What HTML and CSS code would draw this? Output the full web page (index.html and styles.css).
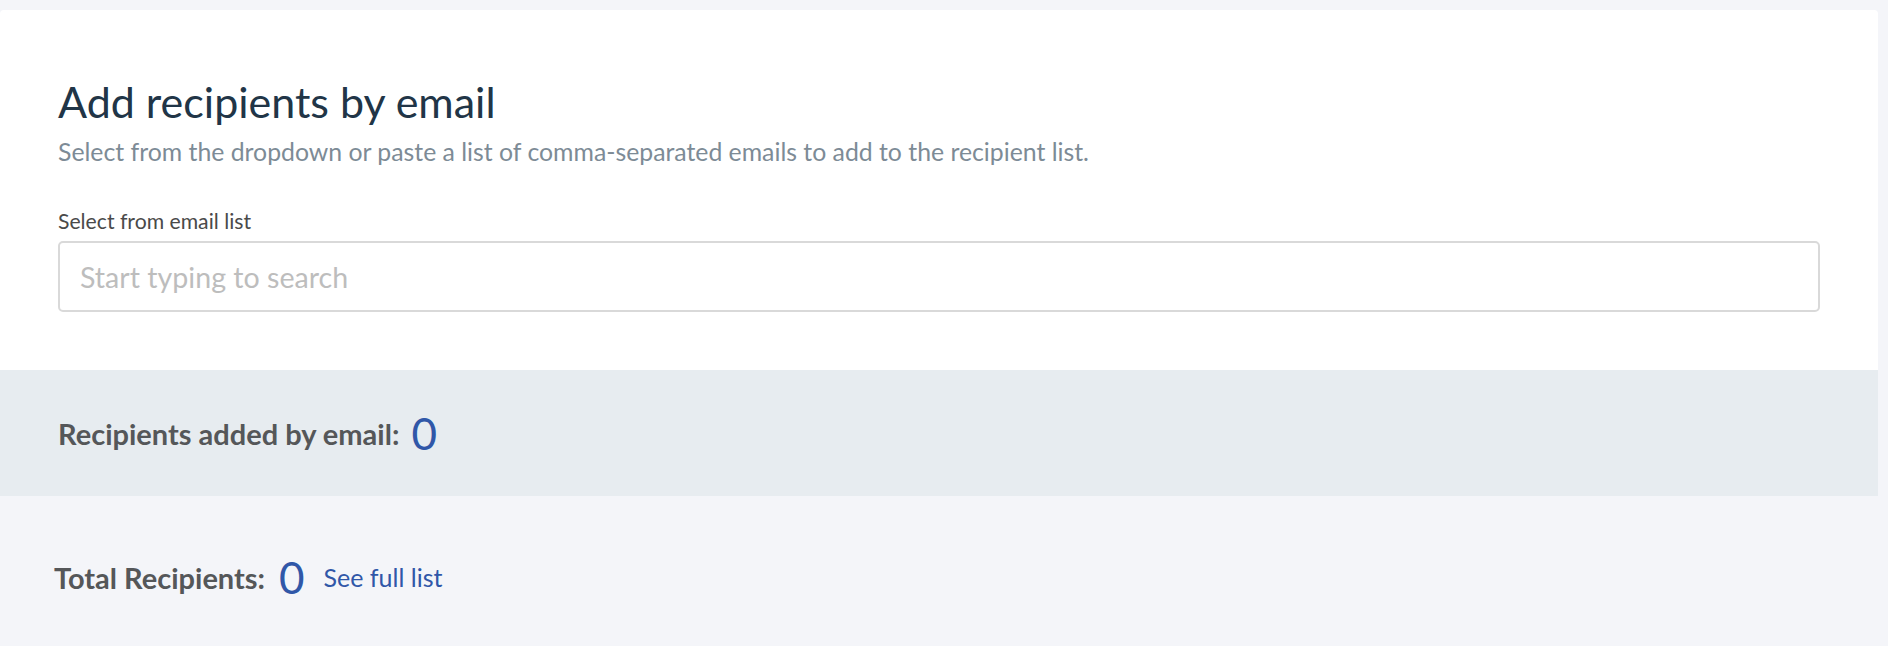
FILE: index.html
```html
<!DOCTYPE html>
<html lang="en">
<head>
<meta charset="utf-8">
<title>Add recipients by email</title>
<link rel="stylesheet" href="styles.css">
</head>
<body>
<main class="page">
  <section class="card">
    <h1 class="title">Add recipients by email</h1>
    <p class="subtitle">Select from the dropdown or paste a list of comma-separated emails to add to the recipient list.</p>
    <label class="field-label" for="email-search">Select from email list</label>
    <input class="search" id="email-search" type="text" placeholder="Start typing to search">
  </section>
  <section class="added">
    <span class="stat-label">Recipients added by email:</span>
    <span class="stat-value">0</span>
  </section>
  <section class="total">
    <span class="stat-label">Total Recipients:</span>
    <span class="stat-value">0</span>
    <a class="see-all" href="#">See full list</a>
  </section>
</main>
</body>
</html>
```

FILE: styles.css
```css
html, body {
  margin: 0;
  padding: 0;
  background: #f4f5f9;
  font-family: Lato, "Open Sans", "Liberation Sans", sans-serif;
}

.page {
  width: 1878px;
  padding-top: 10px;
}

.card {
  background: #ffffff;
  border-radius: 4px 4px 0 0;
  padding: 67px 58px 58px 58px;
  display: flex;
  flex-direction: column;
}

.title {
  margin: 0;
  font-size: 43px;
  line-height: 50px;
  font-weight: 400;
  color: #213547;
}

.subtitle {
  margin: 10px 0 0 0;
  font-size: 24.8px;
  line-height: 30px;
  color: #7d8b96;
}

.field-label {
  margin-top: 40px;
  font-size: 21.2px;
  line-height: 28px;
  color: #4a4a4a;
}

.search {
  margin-top: 6px;
  box-sizing: border-box;
  height: 71px;
  width: 100%;
  border: 2px solid #d9d9d9;
  border-radius: 5px;
  padding: 0 20px;
  font-family: inherit;
  font-size: 28.6px;
  color: #333;
  outline: none;
}

.search::placeholder {
  color: #bdbdbd;
}

.added {
  background: #e7ecf0;
  height: 126px;
  box-sizing: border-box;
  padding: 0 58px;
  display: flex;
  align-items: center;
  gap: 12px;
}

.total {
  height: 150px;
  box-sizing: border-box;
  padding: 12px 54px 0 54px;
  display: flex;
  align-items: center;
  gap: 14px;
}

.stat-label {
  font-size: 29px;
  font-weight: 700;
  color: #555759;
}

.stat-value {
  font-size: 44px;
  line-height: 50px;
  color: #3057a8;
}

.see-all {
  margin-left: 5px;
  font-size: 25px;
  color: #3057a8;
  text-decoration: none;
}
```
